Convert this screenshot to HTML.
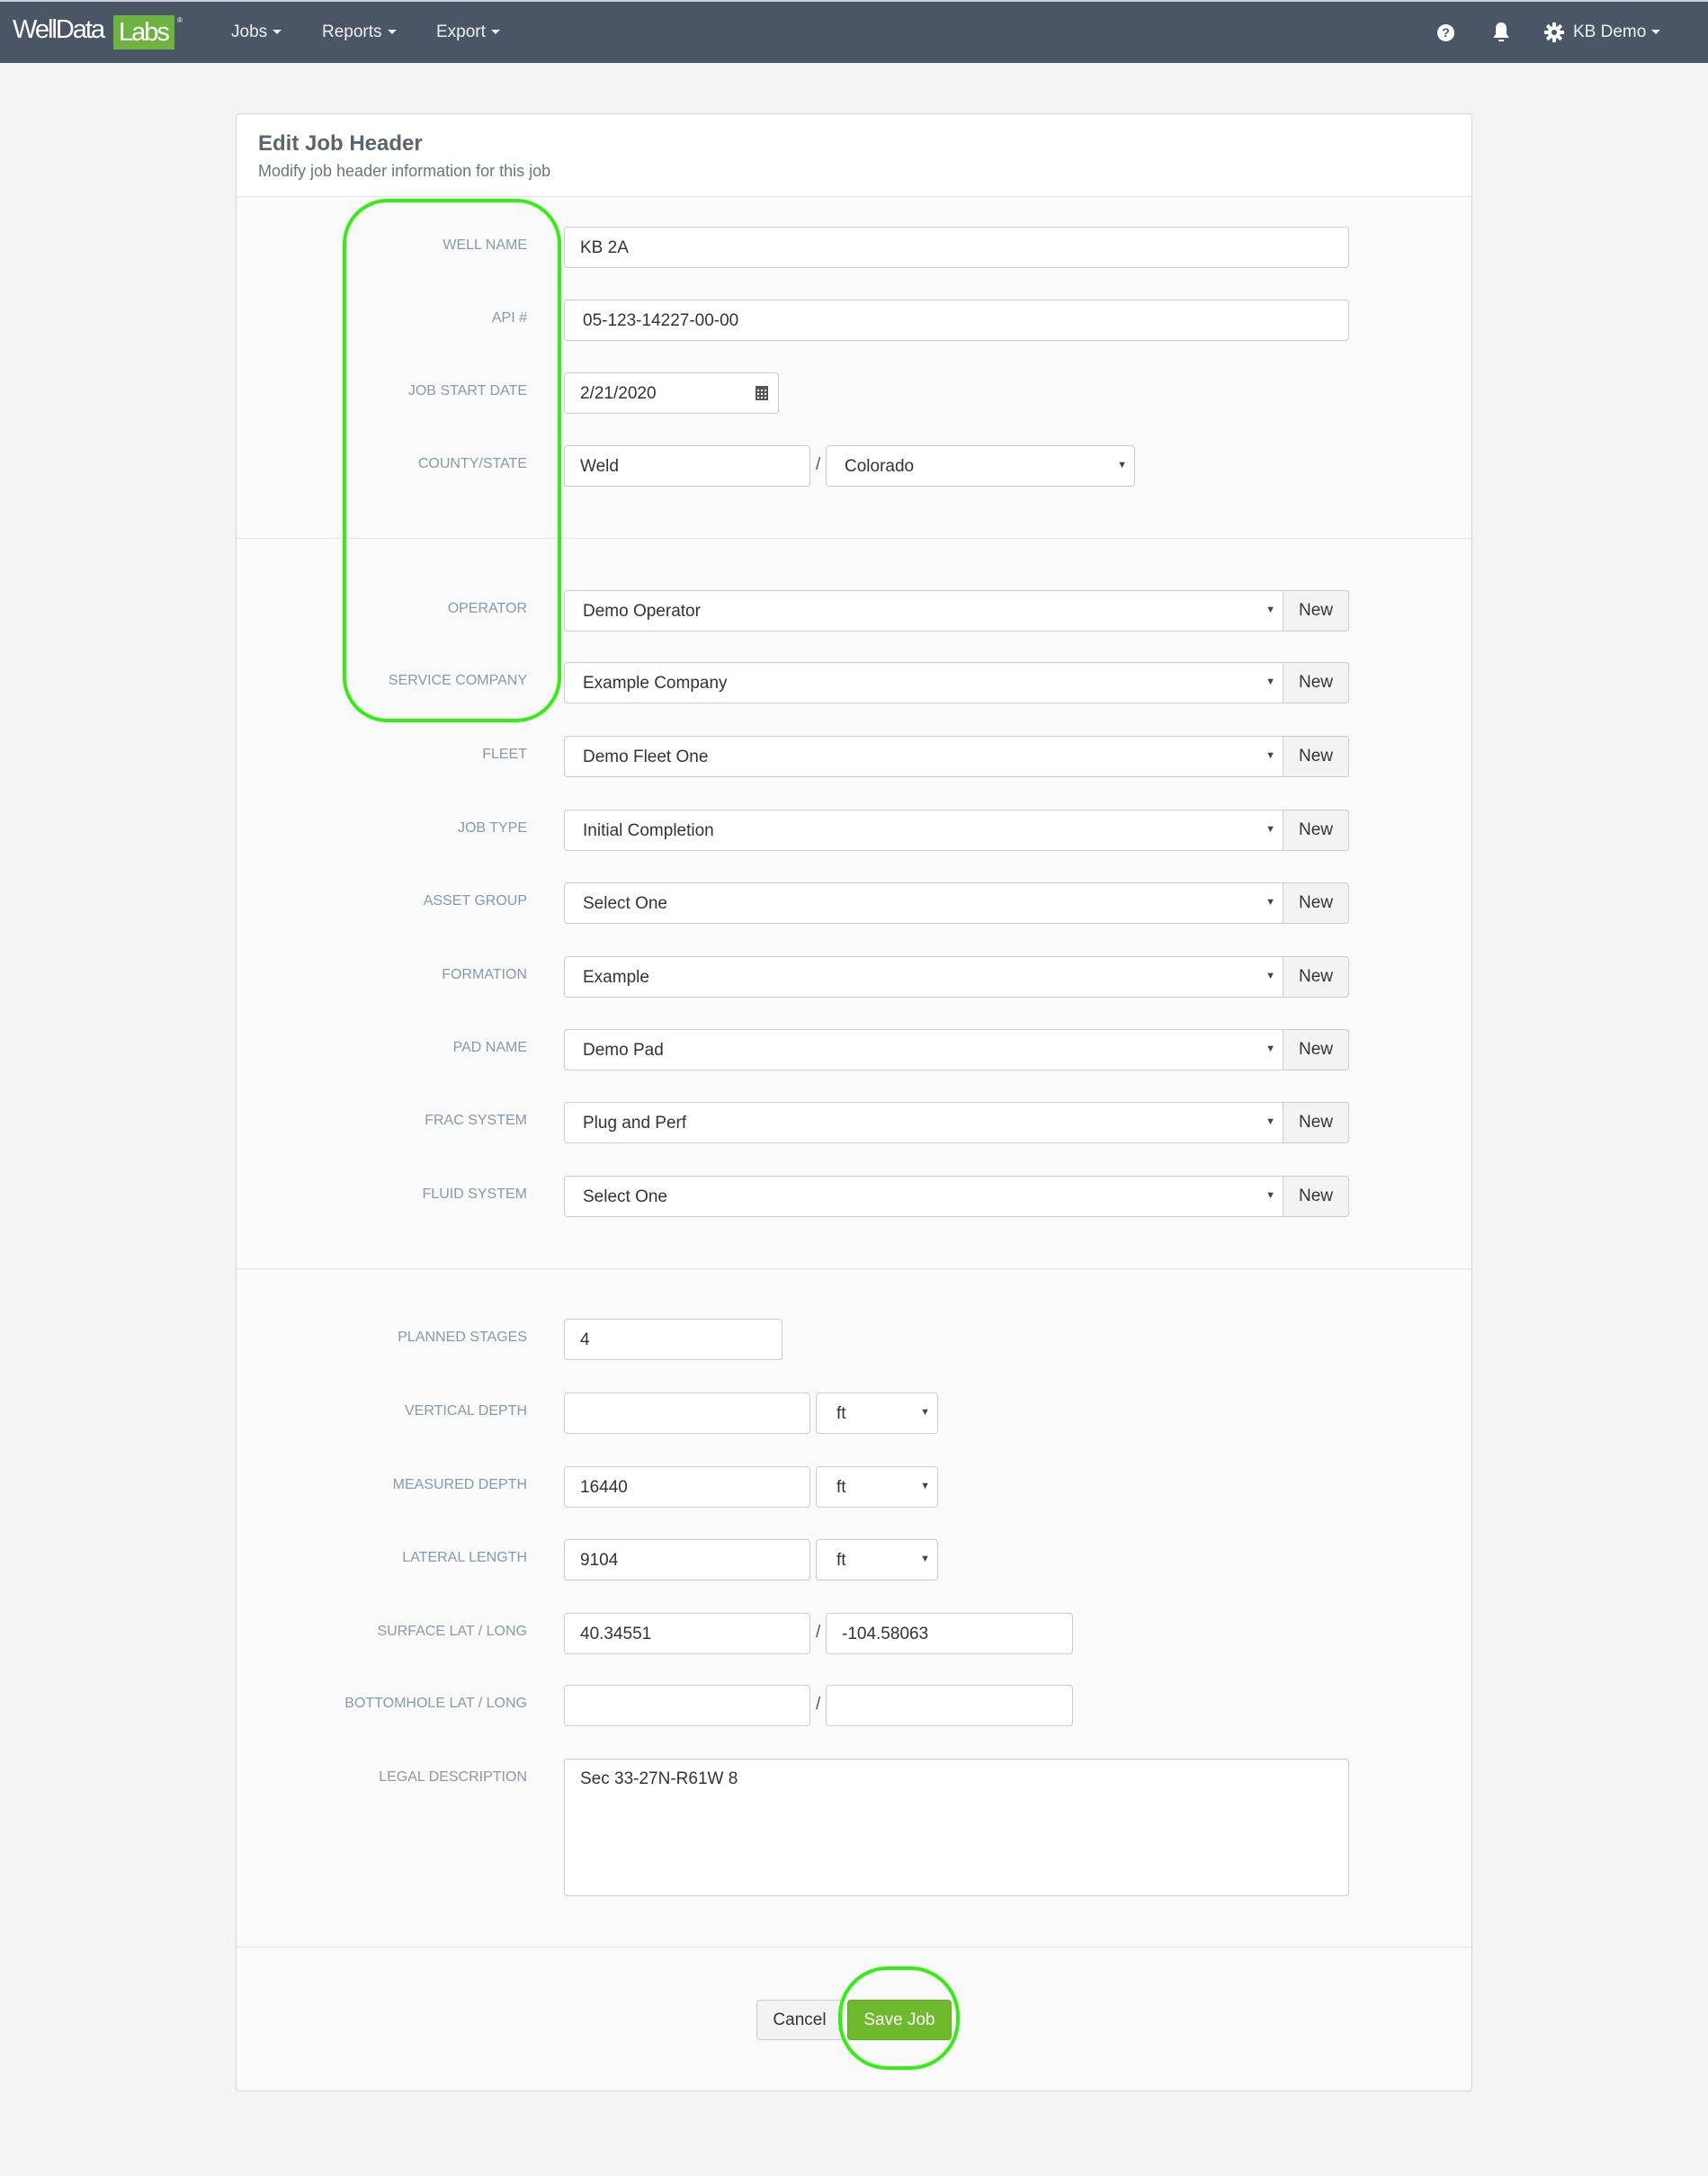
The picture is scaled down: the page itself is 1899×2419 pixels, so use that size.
<!DOCTYPE html>
<html><head><meta charset="utf-8"><style>
*{box-sizing:border-box}
body{margin:0;width:1899px;height:2419px;background:#f4f4f4;font-family:"Liberation Sans",Arial,sans-serif;position:relative;overflow:hidden}
.nav{position:absolute;left:0;top:2px;width:1899px;height:68px;background:#4a5565;color:#fff}
.nav .t{position:absolute;top:23px;font-size:19px;color:#f0f0f0}
.car{display:inline-block;border-left:5px solid transparent;border-right:5px solid transparent;border-top:5px solid #eee;vertical-align:middle;margin-left:6px}
.card{position:absolute;left:262px;top:126px;width:1375px;height:2199px;background:#fafafa;border:1px solid #d6d6d6;border-radius:4px}
.hd{position:absolute;left:0;top:0;width:100%;height:92px;background:#fff;border-bottom:1px solid #e3e3e3;border-radius:4px 4px 0 0}
.hr{position:absolute;left:0;width:100%;border-top:1px solid #e3e3e3}
.lb{position:absolute;right:1313px;font-size:16px;color:#8799aa;text-transform:uppercase;text-align:right;white-space:nowrap}
.in{position:absolute;height:46px;background:#fff;border:1px solid #ccc;border-radius:4px;font-size:19px;color:#333;padding:12px 20px;white-space:nowrap}
.sel::after{content:"▼";position:absolute;right:8px;top:15px;font-size:11px;color:#444}
.nw{position:absolute;height:46px;width:74px;background:#f3f3f3;border:1px solid #ccc;border-radius:0 4px 4px 0;font-size:19px;color:#333;text-align:center;line-height:44px}
.sl{position:absolute;font-size:19px;color:#555}
</style></head><body>
<div style="position:absolute;left:0;top:0;width:1899px;height:2px;background:#ccd"></div>
<div class="nav">
<div style="position:absolute;left:14px;top:15px;font-size:29px;letter-spacing:-2px;color:#fff">WellData</div>
<div style="position:absolute;left:126px;top:15px;width:68px;height:38px;background:#6db33f;font-size:29px;letter-spacing:-2px;padding-left:6px;line-height:38px">Labs</div>
<div style="position:absolute;left:197px;top:16px;font-size:8px">®</div>
<div class="t" style="left:257px">Jobs<span class="car"></span></div>
<div class="t" style="left:358px">Reports<span class="car"></span></div>
<div class="t" style="left:485px">Export<span class="car"></span></div>
<div style="position:absolute;left:1598px;top:25px;width:19px;height:19px;border-radius:50%;background:#fff;color:#4a5565;font-size:14px;font-weight:bold;text-align:center;line-height:19px">?</div>
<svg style="position:absolute;left:1658px;top:22px" width="22" height="24" viewBox="0 0 22 24"><path d="M11 1c-4 0-6 3-6 7v6l-3 4h18l-3-4V8c0-4-2-7-6-7z" fill="#fff"/><rect x="8" y="20" width="6" height="2" fill="#fff"/></svg>
<svg style="position:absolute;left:1717px;top:23px" width="22" height="22" viewBox="0 0 22 22"><g fill="#fff"><circle cx="11" cy="11" r="7"/><rect x="9" y="0" width="4" height="22"/><rect x="0" y="9" width="22" height="4"/><rect x="9" y="0" width="4" height="22" transform="rotate(45 11 11)"/><rect x="9" y="0" width="4" height="22" transform="rotate(-45 11 11)"/></g><circle cx="11" cy="11" r="3" fill="#4a5565"/></svg>
<div class="t" style="left:1749px">KB Demo<span class="car"></span></div>
</div>
<div class="card">
<div class="hd">
<div style="position:absolute;left:24px;top:19px;font-size:24px;font-weight:bold;color:#5a6570">Edit Job Header</div>
<div style="position:absolute;left:24px;top:53px;font-size:18px;color:#6a7580">Modify job header information for this job</div>
</div>
<div class="hr" style="top:471px"></div>
<div class="hr" style="top:1283px"></div>
<div class="hr" style="top:2037px"></div>
</div>
<div class="lb" style="top:264px">Well Name</div><div class="in" style="left:627px;top:252px;width:873px;padding-left:17px">KB 2A</div>
<div class="lb" style="top:345px">API #</div><div class="in" style="left:627px;top:333px;width:873px">05-123-14227-00-00</div>
<div class="lb" style="top:426px">Job Start Date</div><div class="in" style="left:627px;top:414px;width:239px;padding-left:17px">2/21/2020<svg style="position:absolute;right:10px;top:12px" width="16" height="19" viewBox="0 0 16 19"><rect x="1" y="2" width="14" height="16" fill="#555"/><g fill="#fff"><rect x="3" y="6" width="2" height="2"/><rect x="7" y="6" width="2" height="2"/><rect x="11" y="6" width="2" height="2"/><rect x="3" y="10" width="2" height="2"/><rect x="7" y="10" width="2" height="2"/><rect x="11" y="10" width="2" height="2"/><rect x="3" y="14" width="2" height="2"/><rect x="7" y="14" width="2" height="2"/><rect x="11" y="14" width="2" height="2"/></g></svg></div>
<div class="lb" style="top:507px">County/State</div><div class="in" style="left:627px;top:495px;width:274px;padding-left:17px">Weld</div><div class="sl" style="left:907px;top:506px">/</div><div class="in sel" style="left:918px;top:495px;width:344px">Colorado</div>
<div class="lb" style="top:668px">Operator</div><div class="in sel" style="left:627px;top:656px;width:800px;border-radius:4px 0 0 4px">Demo Operator</div><div class="nw" style="left:1426px;top:656px">New</div>
<div class="lb" style="top:748px">Service Company</div><div class="in sel" style="left:627px;top:736px;width:800px;border-radius:4px 0 0 4px">Example Company</div><div class="nw" style="left:1426px;top:736px">New</div>
<div class="lb" style="top:830px">Fleet</div><div class="in sel" style="left:627px;top:818px;width:800px;border-radius:4px 0 0 4px">Demo Fleet One</div><div class="nw" style="left:1426px;top:818px">New</div>
<div class="lb" style="top:912px">Job Type</div><div class="in sel" style="left:627px;top:900px;width:800px;border-radius:4px 0 0 4px">Initial Completion</div><div class="nw" style="left:1426px;top:900px">New</div>
<div class="lb" style="top:993px">Asset Group</div><div class="in sel" style="left:627px;top:981px;width:800px;border-radius:4px 0 0 4px">Select One</div><div class="nw" style="left:1426px;top:981px">New</div>
<div class="lb" style="top:1075px">Formation</div><div class="in sel" style="left:627px;top:1063px;width:800px;border-radius:4px 0 0 4px">Example</div><div class="nw" style="left:1426px;top:1063px">New</div>
<div class="lb" style="top:1156px">Pad Name</div><div class="in sel" style="left:627px;top:1144px;width:800px;border-radius:4px 0 0 4px">Demo Pad</div><div class="nw" style="left:1426px;top:1144px">New</div>
<div class="lb" style="top:1237px">Frac System</div><div class="in sel" style="left:627px;top:1225px;width:800px;border-radius:4px 0 0 4px">Plug and Perf</div><div class="nw" style="left:1426px;top:1225px">New</div>
<div class="lb" style="top:1319px">Fluid System</div><div class="in sel" style="left:627px;top:1307px;width:800px;border-radius:4px 0 0 4px">Select One</div><div class="nw" style="left:1426px;top:1307px">New</div>
<div class="lb" style="top:1478px">Planned Stages</div><div class="in" style="left:627px;top:1466px;width:243px;padding-left:17px">4</div>
<div class="lb" style="top:1560px">Vertical Depth</div><div class="in" style="left:627px;top:1548px;width:274px"></div><div class="in sel" style="left:907px;top:1548px;width:136px;padding-left:22px">ft</div>
<div class="lb" style="top:1642px">Measured Depth</div><div class="in" style="left:627px;top:1630px;width:274px;padding-left:17px">16440</div><div class="in sel" style="left:907px;top:1630px;width:136px;padding-left:22px">ft</div>
<div class="lb" style="top:1723px">Lateral Length</div><div class="in" style="left:627px;top:1711px;width:274px;padding-left:17px">9104</div><div class="in sel" style="left:907px;top:1711px;width:136px;padding-left:22px">ft</div>
<div class="lb" style="top:1805px">Surface Lat / Long</div><div class="in" style="left:627px;top:1793px;width:274px;padding-left:17px">40.34551</div><div class="sl" style="left:907px;top:1804px">/</div><div class="in" style="left:918px;top:1793px;width:275px;padding-left:17px">-104.58063</div>
<div class="lb" style="top:1885px">Bottomhole Lat / Long</div><div class="in" style="left:627px;top:1873px;width:274px"></div><div class="sl" style="left:907px;top:1884px">/</div><div class="in" style="left:918px;top:1873px;width:275px"></div>
<div class="lb" style="top:1967px">Legal Description</div><div class="in" style="left:627px;top:1955px;width:873px;height:153px;padding:11px 17px">Sec 33-27N-R61W 8</div>
<div style="position:absolute;left:841px;top:2223px;width:96px;height:45px;background:#f3f3f3;border:1px solid #ccc;border-radius:4px 0 0 4px;font-size:19px;color:#333;text-align:center;line-height:43px">Cancel</div>
<div style="position:absolute;left:942px;top:2223px;width:116px;height:45px;background:#6fba2c;border:1px solid #64a828;border-radius:4px;font-size:19px;color:#fff;text-align:center;line-height:43px">Save Job</div>
<div style="position:absolute;left:381px;top:221px;width:243px;height:582px;border:4px solid #33ee11;border-radius:50px"></div>
<div style="position:absolute;left:932px;top:2186px;width:135px;height:115px;border:4px solid #33ee11;border-radius:55px"></div>
</body></html>
